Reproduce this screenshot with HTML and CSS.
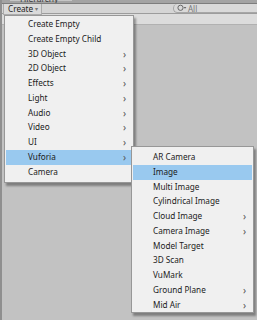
FILE: index.html
```html
<!DOCTYPE html>
<html lang="en">
<head>
  <meta charset="UTF-8" />
  <title>Hierarchy - Create menu</title>
  <link rel="stylesheet" href="styles.css">
</head>
<body>
  <div class="window">
    <div class="tabbar">
      <div class="tab">Hierarchy</div>
    </div>

    <div class="toolbar">
      <div class="create-btn">Create <span class="caret">&#9662;</span></div>
      <div class="search">
        <svg class="search-icon" width="10" height="8" viewBox="0 0 10 8">
          <circle cx="3.5" cy="3.8" r="2.6" fill="none" stroke="#666" stroke-width="1"/>
          <path d="M6.6 3 L9.4 3 L8 4.8 Z" fill="#666"/>
        </svg>
        <span>All</span>
      </div>
    </div>

    <div class="scene-row"></div>
    <div class="panel-body"></div>

    <!-- GameObject > Create menu -->
    <ul class="menu menu-main">
      <li>Create Empty</li>
      <li>Create Empty Child</li>
      <li class="has-sub">3D Object</li>
      <li class="has-sub">2D Object</li>
      <li class="has-sub">Effects</li>
      <li class="has-sub">Light</li>
      <li class="has-sub">Audio</li>
      <li class="has-sub">Video</li>
      <li class="has-sub">UI</li>
      <li class="has-sub active">Vuforia</li>
      <li>Camera</li>
    </ul>

    <!-- Vuforia submenu -->
    <ul class="menu menu-sub">
      <li>AR Camera</li>
      <li class="active">Image</li>
      <li>Multi Image</li>
      <li>Cylindrical Image</li>
      <li class="has-sub">Cloud Image</li>
      <li class="has-sub">Camera Image</li>
      <li>Model Target</li>
      <li>3D Scan</li>
      <li>VuMark</li>
      <li class="has-sub">Ground Plane</li>
      <li class="has-sub">Mid Air</li>
    </ul>
  </div>
</body>
</html>
```

FILE: styles.css
```css
/* === Reset and Base === */
* {
  margin: 0;
  padding: 0;
  box-sizing: border-box;
  font-family: "Noto Sans", "Open Sans", sans-serif;
}

body {
  width: 257px;
  height: 320px;
  overflow: hidden;
  background: #c2c2c2;
}

.window {
  position: relative;
  width: 257px;
  height: 320px;
  display: flex;
  flex-direction: column;
  border-left: 2px solid #8f8f8f;
}

/* === Tab bar (cut off at the top) === */
.tabbar {
  height: 4px;
  background: #a3a3a3;
  border-bottom: 1px solid #7d7d7d;
  overflow: hidden;
}

.tab {
  width: 62px;
  height: 4px;
  margin-left: 8px;
  padding-left: 10px;
  background: #c6c6c6;
  font-size: 8.5px;
  line-height: 4px;
  color: #3a3a3a;
  transform: translateY(-3px);
}

/* === Toolbar === */
.toolbar {
  height: 10px;
  background: #d5d5d5;
  border-bottom: 1px solid #9c9c9c;
  display: flex;
  align-items: flex-start;
  justify-content: space-between;
}

.create-btn {
  height: 11px;
  margin-left: 1px;
  padding: 0 3px 0 4px;
  border: 1px solid #ababab;
  border-top: none;
  background: #dadada;
  font-size: 8.2px;
  line-height: 10px;
  color: #1e1e1e;
  position: relative;
  z-index: 3;
}

.caret {
  font-size: 6px;
  color: #777;
  vertical-align: 1px;
}

.search {
  width: 84px;
  height: 9px;
  display: flex;
  align-items: center;
  gap: 1px;
  padding-left: 3px;
  border: 1px solid #a6a6a6;
  border-right: none;
  border-top: none;
  border-radius: 5px 0 0 5px;
  background: #d9d9d9;
  font-size: 8px;
  color: #777;
}

/* === Hierarchy body === */
.scene-row {
  height: 11px;
  background: #dcdcdc;
  border-bottom: 1px solid #b1b1b1;
}

.panel-body {
  flex: 1;
  background: #c2c2c2;
}

/* === Menus === */
.menu {
  position: absolute;
  list-style: none;
  background: #f0f0f0;
  border: 1px solid #979797;
  box-shadow: 2px 3px 2px rgba(0, 0, 0, 0.35);
  padding: 1px 1px 3px;
  z-index: 2;
}

.menu li {
  position: relative;
  height: 14.75px;
  line-height: 14.75px;
  font-size: 8.2px;
  color: #1b1b1b;
  white-space: nowrap;
}

.menu li.active {
  background: #99c9ef;
}

.menu li.has-sub::after {
  content: "\203A";
  position: absolute;
  right: 6px;
  top: 0;
  color: #555;
  font-size: 10px;
}

.menu-main {
  left: 2px;
  top: 15px;
  width: 130px;
}

.menu-main li {
  padding-left: 22px;
}

.menu-sub {
  left: 129px;
  top: 146px;
  width: 123px;
  padding: 3px 1px 0;
  z-index: 4;
}

.menu-sub li {
  padding-left: 20px;
}
```
